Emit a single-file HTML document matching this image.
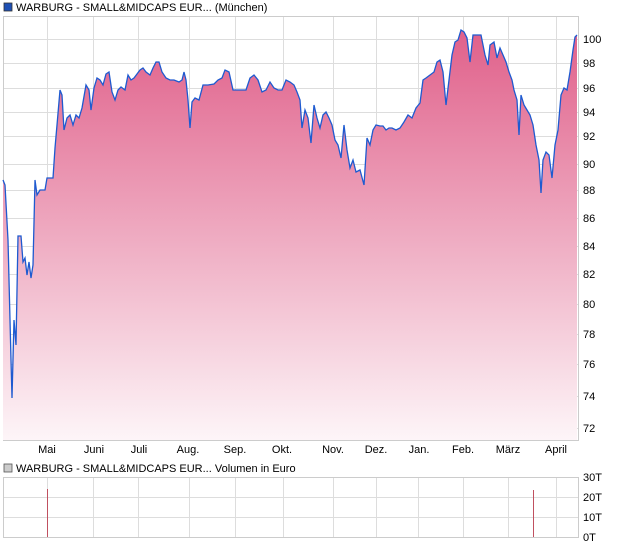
<!DOCTYPE html>
<html><head><meta charset="utf-8"><style>
body{margin:0;background:#fff;width:620px;height:546px;overflow:hidden;font-family:"Liberation Sans",sans-serif}
</style></head><body>
<svg width="620" height="546" xmlns="http://www.w3.org/2000/svg" font-family="Liberation Sans, sans-serif" font-size="11">
<defs><linearGradient id="g" x1="0" y1="30" x2="0" y2="440" gradientUnits="userSpaceOnUse">
<stop offset="0" stop-color="#e0608a"/><stop offset="1" stop-color="#fdf5f8"/></linearGradient></defs>
<rect x="4" y="3" width="8" height="8" fill="#1e50b4" stroke="#333" stroke-width="0.8"/>
<text x="16" y="11">WARBURG - SMALL&amp;MIDCAPS EUR... (München)</text>
<rect x="3.5" y="16.5" width="575" height="424" fill="#fff" stroke="#ccc"/>
<g stroke="#ddd" stroke-width="1">
<path d="M47.5 17V440M93.5 17V440M138.5 17V440M189.5 17V440M235.5 17V440M283.5 17V440M333.5 17V440M376.5 17V440M418.5 17V440M463.5 17V440M508.5 17V440M556.5 17V440"/>
<path d="M4 39.5H578M4 63.5H578M4 88.5H578M4 112.5H578M4 136.5H578M4 164.5H578M4 190.5H578M4 218.5H578M4 246.5H578M4 274.5H578M4 304.5H578M4 334.5H578M4 364.5H578M4 396.5H578M4 428.5H578"/>
</g>
<path id="p" fill="url(#g)" stroke="none" d="M3 440L3 180L5 185L8 240L11 360L12 398L14 320L16 345L18 236L21 236L23 262L25 258L27 275L29 262L31 278L33 265L35 180L37 195L40 190L45 190L47 178L53 178L55 148L57 125L60 90L62 95L64 130L67 118L70 115L73 125L76 115L79 118L82 108L86 85L89 90L91 110L94 88L97 78L100 80L103 85L106 74L109 72L112 92L115 100L118 90L121 87L125 90L128 75L131 80L134 78L137 74L140 70L143 68L146 72L150 75L153 68L156 62L159 62L162 72L166 78L170 80L174 80L179 82L182 80L184 72L186 80L188 100L190 128L192 102L195 98L199 100L203 85L208 85L214 84L218 80L222 78L225 70L229 72L233 90L236 90L246 90L250 78L254 75L258 80L262 92L266 90L270 82L274 88L278 90L282 90L286 80L290 82L294 85L297 92L300 100L302 128L305 110L308 118L311 143L314 105L317 118L320 128L323 115L326 112L329 118L332 125L335 140L338 145L341 158L344 125L347 150L350 168L353 160L356 172L360 170L364 185L367 138L370 145L373 130L376 125L380 126L383 126L386 130L389 128L392 128L396 130L400 128L404 122L408 115L412 118L416 108L420 103L423 80L426 78L430 75L434 72L437 62L440 60L443 72L446 105L449 80L452 55L455 42L458 40L461 30L464 32L467 38L470 62L473 35L477 35L481 35L485 55L488 65L490 45L494 42L497 58L500 48L503 55L506 62L509 72L512 80L514 90L517 100L519 135L521 95L524 105L527 110L530 115L533 125L536 145L539 160L541 193L543 160L546 152L549 155L552 178L555 145L558 130L561 95L564 88L567 90L570 72L573 50L575 37L577 35L577 440Z"/>
<path fill="none" stroke="#1e5ad0" stroke-width="1.3" d="M3 180L5 185L8 240L11 360L12 398L14 320L16 345L18 236L21 236L23 262L25 258L27 275L29 262L31 278L33 265L35 180L37 195L40 190L45 190L47 178L53 178L55 148L57 125L60 90L62 95L64 130L67 118L70 115L73 125L76 115L79 118L82 108L86 85L89 90L91 110L94 88L97 78L100 80L103 85L106 74L109 72L112 92L115 100L118 90L121 87L125 90L128 75L131 80L134 78L137 74L140 70L143 68L146 72L150 75L153 68L156 62L159 62L162 72L166 78L170 80L174 80L179 82L182 80L184 72L186 80L188 100L190 128L192 102L195 98L199 100L203 85L208 85L214 84L218 80L222 78L225 70L229 72L233 90L236 90L246 90L250 78L254 75L258 80L262 92L266 90L270 82L274 88L278 90L282 90L286 80L290 82L294 85L297 92L300 100L302 128L305 110L308 118L311 143L314 105L317 118L320 128L323 115L326 112L329 118L332 125L335 140L338 145L341 158L344 125L347 150L350 168L353 160L356 172L360 170L364 185L367 138L370 145L373 130L376 125L380 126L383 126L386 130L389 128L392 128L396 130L400 128L404 122L408 115L412 118L416 108L420 103L423 80L426 78L430 75L434 72L437 62L440 60L443 72L446 105L449 80L452 55L455 42L458 40L461 30L464 32L467 38L470 62L473 35L477 35L481 35L485 55L488 65L490 45L494 42L497 58L500 48L503 55L506 62L509 72L512 80L514 90L517 100L519 135L521 95L524 105L527 110L530 115L533 125L536 145L539 160L541 193L543 160L546 152L549 155L552 178L555 145L558 130L561 95L564 88L567 90L570 72L573 50L575 37L577 35"/>
<g fill="#000">
<text x="583" y="43">100</text><text x="583" y="67">98</text><text x="583" y="92">96</text><text x="583" y="116">94</text><text x="583" y="140">92</text><text x="583" y="168">90</text><text x="583" y="194">88</text><text x="583" y="222">86</text><text x="583" y="250">84</text><text x="583" y="278">82</text><text x="583" y="308">80</text><text x="583" y="338">78</text><text x="583" y="368">76</text><text x="583" y="400">74</text><text x="583" y="432">72</text>
<text x="47" y="453" text-anchor="middle">Mai</text><text x="94" y="453" text-anchor="middle">Juni</text><text x="139" y="453" text-anchor="middle">Juli</text><text x="188" y="453" text-anchor="middle">Aug.</text><text x="235" y="453" text-anchor="middle">Sep.</text><text x="282" y="453" text-anchor="middle">Okt.</text><text x="333" y="453" text-anchor="middle">Nov.</text><text x="376" y="453" text-anchor="middle">Dez.</text><text x="419" y="453" text-anchor="middle">Jan.</text><text x="463" y="453" text-anchor="middle">Feb.</text><text x="508" y="453" text-anchor="middle">März</text><text x="556" y="453" text-anchor="middle">April</text>
</g>
<rect x="4" y="464" width="8" height="8" fill="#ccc" stroke="#555" stroke-width="0.8"/>
<text x="16" y="472">WARBURG - SMALL&amp;MIDCAPS EUR... Volumen in Euro</text>
<rect x="3.5" y="477.5" width="575" height="60" fill="#fff" stroke="#ccc"/>
<g stroke="#ddd"><path d="M4 497.5H578M4 517.5H578M47.5 478V537M93.5 478V537M138.5 478V537M189.5 478V537M235.5 478V537M283.5 478V537M333.5 478V537M376.5 478V537M418.5 478V537M463.5 478V537M508.5 478V537M556.5 478V537"/></g>
<path d="M47.5 489V537M533.5 490V537" stroke="#c05060" stroke-width="1"/>
<text x="583" y="481">30T</text><text x="583" y="501">20T</text><text x="583" y="521">10T</text><text x="583" y="541">0T</text>
</svg>
</body></html>
